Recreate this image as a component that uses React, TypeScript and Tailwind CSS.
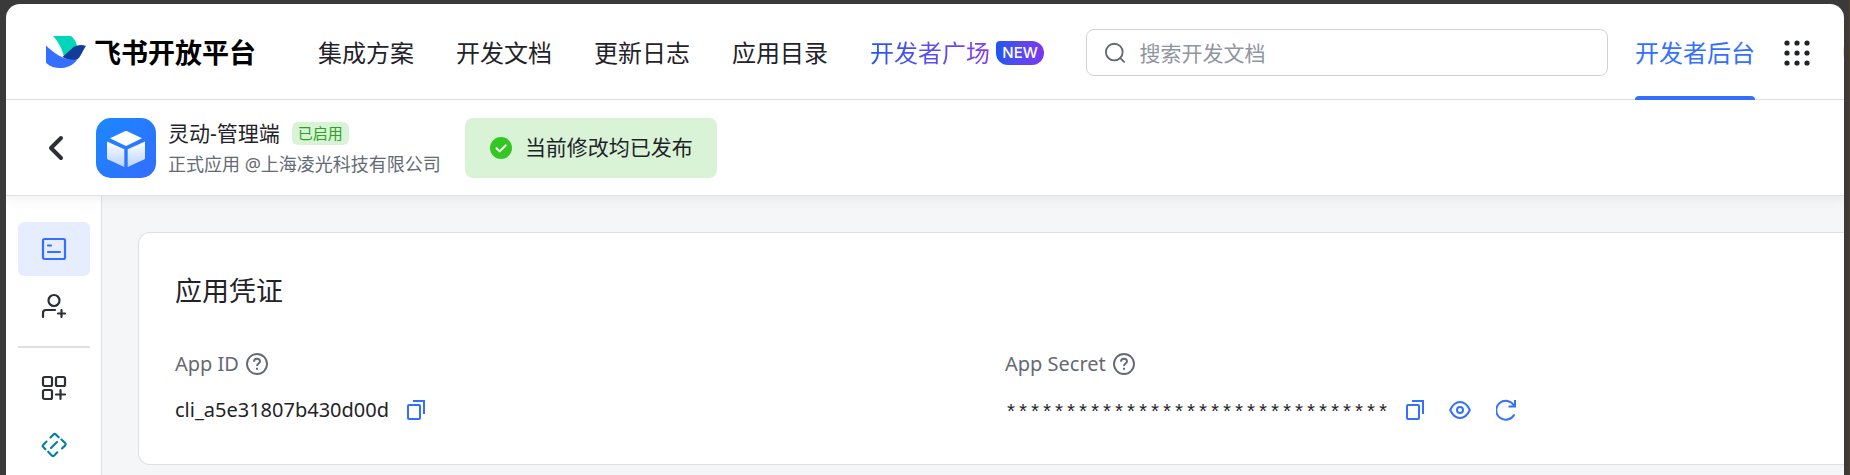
import React from 'react';

const NAV = ['集成方案', '开发文档', '更新日志', '应用目录'];

function Logo() {
  return (
    <svg width="40" height="32" viewBox="0 0 40 32" aria-hidden="true">
      <path d="M7 0h18c3.600 2.500 5.500 6.500 6 10l-13 10.500C16 12 12 5.500 7 0Z" fill="#00d6b9" />
      <path d="M40 10c-4-1.800-9.500-1.200-13 1.500-4 3-7 7-10.500 9.200C21 23.500 26 25 31 23.500 35 21 36.500 14.500 40 10Z" fill="#133c9a" />
      <path d="M0 9.500C8 17.500 19 25 31 23.700 26.500 30 20 32 14 32 9 32 4 30.500 .8 27.500 0 26.800 0 26.500 0 25.500Z" fill="#3370ff" />
    </svg>
  );
}

function AppIcon() {
  return (
    <svg width="60" height="60" viewBox="0 0 60 60" aria-hidden="true" className="shrink-0">
      <defs>
        <linearGradient id="tile" x1="0" y1="0" x2="1" y2="1">
          <stop offset="0" stopColor="#1a88ff" />
          <stop offset="1" stopColor="#336dff" />
        </linearGradient>
        <linearGradient id="face" x1="0" y1="0" x2="0" y2="1">
          <stop offset="0" stopColor="#ffffff" />
          <stop offset="1" stopColor="#b9d1ff" />
        </linearGradient>
      </defs>
      <rect width="60" height="60" rx="15" fill="url(#tile)" />
      <path d="M28.800 13.300a3 3 0 0 1 2.400 0L46 20.300 31.200 27.500a3 3 0 0 1-2.400 0L14 20.300Z" fill="#fff" />
      <path d="M11 23.500 28.300 31.300V49L12 41.500a1.800 1.800 0 0 1-1-1.600Z" fill="url(#face)" />
      <path d="M49 23.500 31.700 31.300V49L48 41.500a1.800 1.800 0 0 0 1-1.600Z" fill="url(#face)" />
    </svg>
  );
}

function HelpIcon() {
  return (
    <svg width="22" height="22" viewBox="0 0 22 22" fill="none" stroke="currentColor" strokeWidth="1.900" aria-hidden="true">
      <circle cx="11" cy="11" r="10" />
      <path d="M8 8.800C8 6.800 9.300 5.700 11 5.700s3 1.100 3 2.800c0 2-3 2.200-3 4.500" />
      <path d="M11 14.700v2" strokeWidth="2" />
    </svg>
  );
}

function CopyIcon() {
  return (
    <svg width="18" height="20" viewBox="0 0 18 20" fill="none" stroke="currentColor" strokeWidth="2" aria-hidden="true">
      <rect x="1" y="5" width="12" height="14" rx="1" />
      <path d="M6 1h11v13" />
    </svg>
  );
}

function EyeIcon() {
  return (
    <svg width="22" height="20" viewBox="0 0 22 20" fill="none" stroke="currentColor" strokeWidth="2" aria-hidden="true">
      <path d="M1.200 10C3.500 5 7 2 11 2s7.500 3 9.800 8c-2.300 5-5.800 8-9.800 8S3.500 15 1.200 10Z" strokeLinejoin="round" />
      <circle cx="11" cy="10" r="3" />
    </svg>
  );
}

function RefreshIcon() {
  return (
    <svg width="20" height="22" viewBox="0 0 20 22" fill="none" stroke="currentColor" strokeWidth="2" aria-hidden="true">
      <path d="M18 16A9.500 9.500 0 1 1 18 6.500" strokeLinecap="round" />
      <path d="M19 1v6.500h-6.500" />
    </svg>
  );
}

function Label({ text }: { text: string }) {
  return (
    <div className="flex h-7 items-center gap-[7px] text-[#646a73]">
      <span>{text}</span>
      <button type="button" aria-label={text + ' 说明'}>
        <HelpIcon />
      </button>
    </div>
  );
}

export default function App() {
  return (
    <div className="min-h-screen overflow-hidden border-r border-[#5c3d20] bg-[#3a3a3a] pt-1 pr-[5px] pl-1.5 font-['Noto_Sans','Noto_Sans_CJK_SC',sans-serif] text-[#1f2329]">
      <div className="flex min-h-[calc(100vh-4px)] flex-col overflow-hidden rounded-t-[14px] bg-white">
        <header className="relative flex h-24 shrink-0 items-center border-b border-[#dee0e3] pt-0.5 pr-[33px] pl-10 text-2xl whitespace-nowrap">
          <a href="#" className="flex items-center gap-2 text-[27px] font-bold text-black">
            <Logo />
            飞书开放平台
          </a>
          <nav className="ml-[62px] flex items-center gap-[42px]">
            {NAV.map((item) => (
              <a key={item} href="#">{item}</a>
            ))}
            <a href="#" className="flex items-center gap-1.5">
              <span className="bg-linear-to-r from-[#1456f0] to-[#7f3bf5] bg-clip-text text-transparent">开发者广场</span>
              <span className="flex h-6 w-12 items-center justify-center rounded-[12px] rounded-tl-[4px] bg-linear-to-r from-[#1456f0] to-[#7a35f0] font-['Inter',sans-serif] text-[15px] font-medium text-white">NEW</span>
            </a>
          </nav>
          <label className="ml-[42px] flex h-[47px] flex-1 items-center gap-3.5 rounded-lg border border-[#d0d3d6] px-[18px]">
            <svg width="22" height="22" viewBox="0 0 22 22" fill="none" stroke="#646a73" strokeWidth="2" strokeLinecap="round" aria-hidden="true">
              <circle cx="10" cy="10" r="9" />
              <path d="m16.500 16.500 4 4" />
            </svg>
            <input type="search" aria-label="搜索开发文档" placeholder="搜索开发文档" className="w-full text-[21px] outline-none placeholder:text-[#8f959e]" />
          </label>
          <a href="#" className="relative ml-[27px] flex items-center self-stretch text-[#3370ff]">
            开发者后台
            <span className="absolute inset-x-0 -bottom-px h-1 rounded-t bg-[#3370ff]" />
          </a>
          <button type="button" aria-label="应用" className="ml-7">
            <svg width="28" height="28" viewBox="0 0 28 28" fill="#1f2329" aria-hidden="true">
              {[4, 14, 24].map((y) => [4, 14, 24].map((x) => <circle key={x + '-' + y} cx={x} cy={y} r="2.600" />))}
            </svg>
          </button>
          <button type="button" aria-label="账号" className="absolute top-6 -right-[47px] size-12 rounded-full bg-[#e9e2b4]" />
        </header>

        <section className="relative flex h-24 shrink-0 items-center border-b border-[#dee0e3] pl-10 shadow-[0_4px_10px_rgba(31,35,41,0.06)]">
          <button type="button" aria-label="返回" className="flex w-[50px] justify-start">
            <svg width="20" height="26" viewBox="0 0 20 26" fill="none" stroke="#2b2f36" strokeWidth="4" strokeLinecap="round" strokeLinejoin="round" aria-hidden="true">
              <path d="M15 3 5 13l10 10" />
            </svg>
          </button>
          <AppIcon />
          <div className="ml-3">
            <div className="flex h-8 items-center gap-3">
              <h1 className="text-[21px]">灵动-管理端</h1>
              <span className="flex h-[23px] items-center rounded-md bg-[#d9f3d6] px-1.5 text-[15px] text-[#2ea121]">已启用</span>
            </div>
            <p className="text-lg leading-7 text-[#646a73]">正式应用 @上海凌光科技有限公司</p>
          </div>
          <div className="ml-6 flex h-[60px] items-center gap-3 rounded-lg bg-[#d9f3d6] px-6 text-[21px]">
            <svg width="24" height="24" viewBox="0 0 24 24" aria-hidden="true">
              <circle cx="12" cy="12" r="11" fill="#34c724" />
              <path d="m7.500 12.200 3.200 3.200 6-6" fill="none" stroke="#fff" strokeWidth="2" strokeLinecap="round" strokeLinejoin="round" />
            </svg>
            当前修改均已发布
          </div>
        </section>

        <div className="flex flex-1">
          <aside className="flex w-24 shrink-0 flex-col items-center border-r border-[#dee0e3] pt-[26px] pr-[11px] pl-3 text-[#2b2f36]">
            <button type="button" aria-label="凭证与基础信息" className="flex h-[54px] w-full items-center justify-center rounded-md bg-[#e6edff] text-[#3370ff]">
              <svg width="26" height="26" viewBox="0 0 26 26" fill="none" stroke="currentColor" strokeWidth="2.200" strokeLinecap="round" aria-hidden="true">
                <rect x="2" y="3" width="22" height="20" rx="1.500" />
                <path d="M7 9.500h3M7 16h12" />
              </svg>
            </button>
            <button type="button" aria-label="成员管理" className="mt-[3px] flex h-[54px] w-full items-center justify-center">
              <svg width="26" height="26" viewBox="0 0 26 26" fill="none" stroke="currentColor" strokeWidth="2.200" strokeLinecap="round" aria-hidden="true">
                <circle cx="13" cy="7.500" r="5.500" />
                <path d="M2 24v-4a3 3 0 0 1 3-3h9M17 20.500h7M20.500 17v7" />
              </svg>
            </button>
            <hr className="my-[13px] w-full border-t-2 border-[#dee0e3]" />
            <button type="button" aria-label="添加应用能力" className="flex h-[54px] w-full items-center justify-center">
              <svg width="26" height="26" viewBox="0 0 26 26" fill="none" stroke="currentColor" strokeWidth="2.200" strokeLinecap="round" aria-hidden="true">
                <rect x="2" y="2" width="9" height="9" rx="1.500" />
                <rect x="15" y="2" width="9" height="9" rx="1.500" />
                <rect x="2" y="15" width="9" height="9" rx="1.500" />
                <path d="M15 19.500h9M19.500 15v9" />
              </svg>
            </button>
            <button type="button" aria-label="网页应用" className="mt-[3px] flex h-[54px] w-full items-center justify-center text-[#037eaa]">
              <svg width="26" height="26" viewBox="0 0 26 26" fill="none" stroke="currentColor" strokeWidth="2.100" strokeLinecap="round" strokeLinejoin="round" aria-hidden="true">
                <path d="m9.500 5.500 3-3q1.200-1.200 2.400 0l2.800 2.800M20.500 7.500l3.600 3.600q1.200 1.200 0 2.400L21 16.500M7.200 19.700l3.600 3.700q1.200 1.200 2.400 0l3.100-3.100M5.500 9.500l-3.200 3.200q-1.200 1.200 0 2.400L4.400 17.200M10 16l6-6" />
              </svg>
            </button>
          </aside>
          <main className="min-w-0 flex-1 bg-[#f5f6f7] pt-9 pl-9">
            <section className="rounded-l-xl border border-r-0 border-[#dee0e3] bg-white pt-10 pr-[9px] pb-10 pl-9">
              <h2 className="h-9 text-[27px] leading-9">应用凭证</h2>
              <div className="mt-[41px] grid grid-cols-2 text-xl leading-7">
                <div>
                  <Label text="App ID" />
                  <div className="mt-[18px] flex h-7 items-center gap-[18px]">
                    <span>cli_a5e31807b430d00d</span>
                    <button type="button" aria-label="复制 App ID" className="text-[#3370ff]"><CopyIcon /></button>
                  </div>
                </div>
                <div>
                  <Label text="App Secret" />
                  <div className="mt-[18px] flex h-7 items-center">
                    <span className="pt-2 font-['Liberation_Mono',monospace]">{'*'.repeat(32)}</span>
                    <div className="ml-[17px] flex items-center gap-[25px] text-[#3370ff]">
                      <button type="button" aria-label="复制 App Secret"><CopyIcon /></button>
                      <button type="button" aria-label="显示 App Secret"><EyeIcon /></button>
                      <button type="button" aria-label="重置 App Secret"><RefreshIcon /></button>
                    </div>
                  </div>
                </div>
              </div>
            </section>
          </main>
        </div>
      </div>
    </div>
  );
}
